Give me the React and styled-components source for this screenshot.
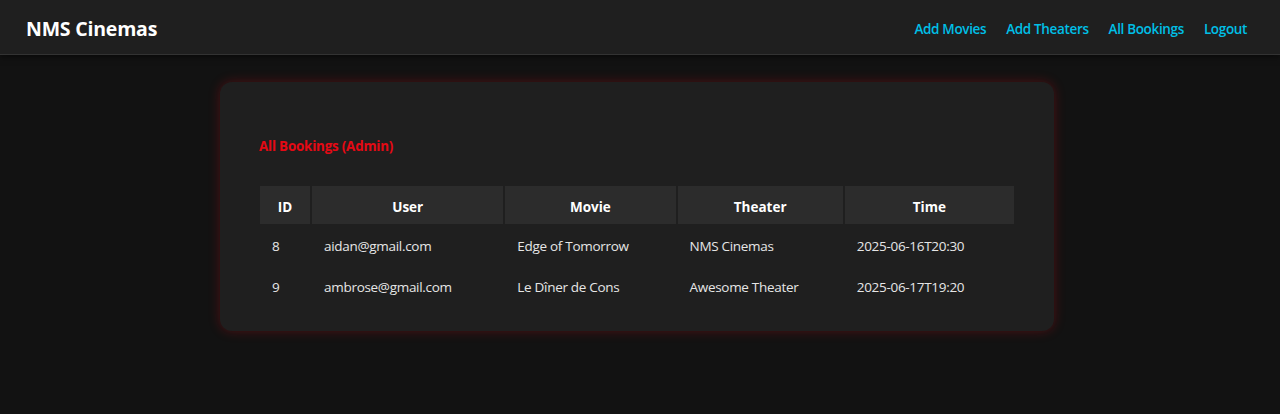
import styled, { createGlobalStyle } from "styled-components";

const GlobalStyle = createGlobalStyle`
  body {
    margin: 0;
    background-color: #121212;
    color: #eeeeee;
    font-family: "Open Sans", "Noto Sans", "DejaVu Sans", sans-serif;
  }
`;

const Page = styled.div`
  min-height: 414px;
  background-color: #121212;
`;

const Navbar = styled.nav`
  height: 55px;
  box-sizing: border-box;
  display: flex;
  align-items: center;
  justify-content: space-between;
  padding: 3px 33px 0 26px;
  background-color: #1f1f1f;
  border-bottom: 1px solid #333333;
  box-shadow: 0 2px 6px rgba(0, 0, 0, 0.5);
`;

const Brand = styled.div`
  font-size: 19.5px;
  font-weight: 700;
  color: #ffffff;
  letter-spacing: -0.2px;
`;

const Links = styled.div`
  display: flex;
  gap: 20px;
`;

const NavLink = styled.a`
  color: #00bfe6;
  font-size: 13.5px;
  font-weight: 600;
  text-decoration: none;
  letter-spacing: -0.35px;
  cursor: pointer;
`;

const Main = styled.main`
  display: flex;
  justify-content: center;
  padding: 27px 6px 0 0;
`;

const Card = styled.div`
  width: 834px;
  box-sizing: border-box;
  padding: 55px 38px 23px;
  background-color: #1f1f1f;
  border-radius: 12px;
  box-shadow: 0 0 12px rgba(229, 9, 20, 0.28);
`;

const Title = styled.h2`
  margin: 0 0 29px;
  padding-left: 1px;
  color: #e50914;
  font-size: 13.4px;
  font-weight: 700;
  letter-spacing: -0.2px;
`;

const Table = styled.table`
  width: 100%;
  border-spacing: 2px;
  font-size: 13.5px;
`;

const Th = styled.th`
  width: ${(p) => p.w}px;
  height: 38px;
  box-sizing: border-box;
  padding: 3px 12px 0;
  background-color: #2c2c2c;
  color: #ffffff;
  font-weight: 700;
  text-align: center;
`;

const Td = styled.td`
  height: 39px;
  padding: 0 12px;
  color: #e6e6e6;
  text-align: left;
  letter-spacing: -0.3px;
`;

const columns = [
  { label: "ID", w: 50 },
  { label: "User", w: 191 },
  { label: "Movie", w: 170 },
  { label: "Theater", w: 165 },
  { label: "Time", w: 169 },
];

const bookings = [
  { id: 8, user: "aidan@gmail.com", movie: "Edge of Tomorrow", theater: "NMS Cinemas", time: "2025-06-16T20:30" },
  { id: 9, user: "ambrose@gmail.com", movie: "Le Dîner de Cons", theater: "Awesome Theater", time: "2025-06-17T19:20" },
];

const App = () => {
  return (
    <Page>
      <GlobalStyle />
      <Navbar>
        <Brand>NMS Cinemas</Brand>
        <Links>
          <NavLink>Add Movies</NavLink>
          <NavLink>Add Theaters</NavLink>
          <NavLink>All Bookings</NavLink>
          <NavLink>Logout</NavLink>
        </Links>
      </Navbar>
      <Main>
        <Card>
          <Title>All Bookings (Admin)</Title>
          <Table>
            <thead>
              <tr>
                {columns.map((c) => (
                  <Th key={c.label} w={c.w}>{c.label}</Th>
                ))}
              </tr>
            </thead>
            <tbody>
              {bookings.map((b) => (
                <tr key={b.id}>
                  <Td>{b.id}</Td>
                  <Td>{b.user}</Td>
                  <Td>{b.movie}</Td>
                  <Td>{b.theater}</Td>
                  <Td>{b.time}</Td>
                </tr>
              ))}
            </tbody>
          </Table>
        </Card>
      </Main>
    </Page>
  );
};

export default App;
